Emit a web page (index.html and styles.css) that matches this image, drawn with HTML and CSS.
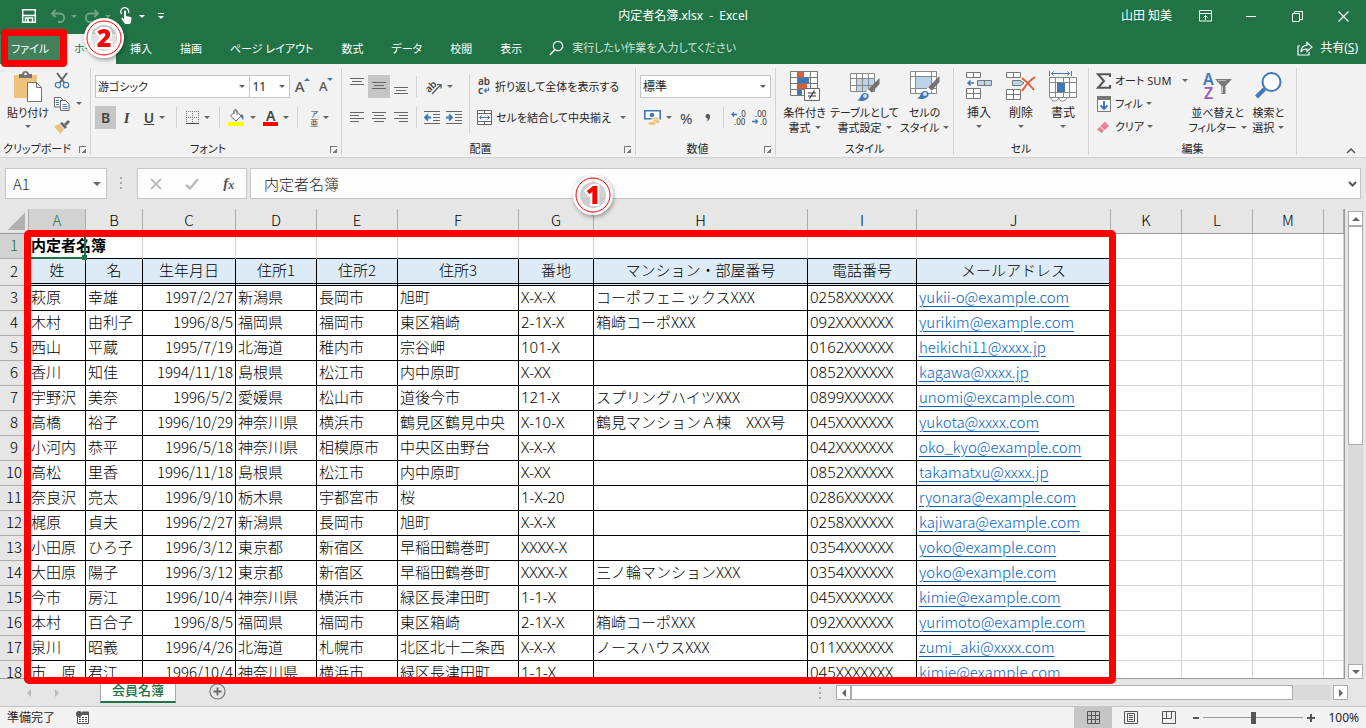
FILE: index.html
```html
<!DOCTYPE html>
<html lang="ja">
<head>
    <meta charset="UTF-8">
    <meta name="viewport" content="width=device-width, initial-scale=1.0">
    <title>内定者名簿.xlsx - Excel</title>
    <link rel="stylesheet" href="styles.css">
</head>
<body>
    <header class="titlebar">
        <div class="quick">
            <button class="q-btn save" aria-label="上書き保存"><svg width="16" height="16" viewBox="0 0 16 16"><path d="M1.700 1.700h12.600v12.600H1.700z" fill="none" stroke="#fff" stroke-width="1.500"/><path d="M2 7.500h12M4.500 14v-4h7v4" fill="none" stroke="#fff" stroke-width="1.500"/><path d="M6 11h2v3H6z" fill="#fff"/></svg></button>
            <button class="q-btn dim" aria-label="元に戻す"><svg width="16" height="16" viewBox="0 0 16 16"><path d="M5.500 2 2 5.500 5.500 9M2 5.500h8a4 4 0 0 1 0 8.500H8" fill="none" stroke="#fff" stroke-width="1.800"/></svg><i class="caret"></i></button>
            <button class="q-btn dim" aria-label="やり直し"><svg width="16" height="16" viewBox="0 0 16 16"><path d="M10.500 2 14 5.500 10.500 9M14 5.500H6a4 4 0 0 0 0 8.500h2" fill="none" stroke="#fff" stroke-width="1.800"/></svg><i class="caret"></i></button>
            <button class="q-btn" aria-label="タッチ/マウス"><svg width="16" height="18" viewBox="0 0 16 18"><path d="M3.500 7a4 4 0 1 1 7 -1" fill="none" stroke="#fff" stroke-width="1.300"/><path d="M6 4.500c0-1.300 2-1.300 2 0V9l4.500 1c.8.200 1 .8 1 1.500L13 15l-1 2H7l-3.500-5c-.4-1 .8-1.500 1.500-.8l1 .8z" fill="#fff"/></svg><i class="caret"></i></button>
            <button class="q-btn custom" aria-label="カスタマイズ"><i class="caret"></i></button>
        </div>
        <div class="doc-title">内定者名簿.xlsx&nbsp; -&nbsp; Excel</div>
        <div class="account">
            <span class="user">山田 知美</span>
            <button class="win-btn" aria-label="リボンの表示オプション"><svg width="13" height="12" viewBox="0 0 13 12"><path d="M.5.5h12v10.500H.5zM.5 3.500h12M6.500 10V5.500M4.500 7.500l2-2 2 2" fill="none" stroke="#fff"/></svg></button>
            <button class="win-btn" aria-label="最小化"><svg width="10" height="10"><path d="M0 5.500h10" stroke="#fff"/></svg></button>
            <button class="win-btn" aria-label="元のサイズに戻す"><svg width="11" height="11" viewBox="0 0 11 11"><path d="M.5 2.500h7v8h-7zM2.500 2.500v-2h8v8h-3" fill="none" stroke="#fff"/></svg></button>
            <button class="win-btn" aria-label="閉じる"><svg width="11" height="11" viewBox="0 0 11 11"><path d="M.5.5l10 10M10.500.5l-10 10" stroke="#fff" stroke-width="1.200"/></svg></button>
        </div>
    </header>

    <nav class="tabs">
        <button class="tab file">ファイル<span class="file-frame"></span></button>
        <button class="tab active">ホーム</button>
        <button class="tab">挿入</button>
        <button class="tab">描画</button>
        <button class="tab">ページ レイアウト</button>
        <button class="tab">数式</button>
        <button class="tab">データ</button>
        <button class="tab">校閲</button>
        <button class="tab">表示</button>
        <label class="tell-me">
            <svg width="15" height="16" viewBox="0 0 15 16"><circle cx="9" cy="6" r="4.700" fill="none" stroke="#fff" stroke-width="1.200"/><path d="M6 9.500.8 15" stroke="#fff" stroke-width="1.400"/></svg>
            <input type="text" placeholder="実行したい作業を入力してください" aria-label="操作アシスト">
        </label>
        <button class="share"><svg width="16" height="15" viewBox="0 0 16 15"><path d="M3 5H1v9h11v-3" fill="none" stroke="#fff" stroke-width="1.200"/><path d="M10 1.500 15 6l-5 4.500V8C7 8 5 9 4 11c0-4 2-6.500 6-7z" fill="none" stroke="#fff" stroke-width="1.200"/></svg><span>共有(<u>S</u>)</span></button>
        <svg class="badge badge-two" width="52" height="52" viewBox="0 0 52 52"><circle cx="26" cy="26" r="18" fill="#f3f3f3" fill-opacity=".75"/><circle class="ring-white" cx="26" cy="26" r="16.500"/><circle class="ring-red" cx="26" cy="26" r="17"/><text x="26" y="35">2</text></svg>
    </nav>

    <section class="ribbon">
        <div class="group clipboard">
            <div class="tools">
                <button class="big"><svg width="30" height="31" viewBox="0 0 30 31"><path d="M1 4h23v23H1z" fill="#eec27c"/><path d="M6 3h3c0-4 7-4 7 0h3v4H6z" fill="#737373"/><circle cx="12.500" cy="3" r="1.300" fill="#fff"/><path d="M14.500 11.500h9l5 5v14h-14z" fill="#fff" stroke="#737373"/><path d="M23.500 11.500v5h5" fill="none" stroke="#737373"/></svg><span>貼り付け</span><i class="caret"></i></button>
                <div class="stack">
                    <button class="small" aria-label="切り取り"><svg width="16" height="16" viewBox="0 0 16 16"><path d="M3 0l7.500 10M13 0 5.500 10" stroke="#666" stroke-width="2"/><circle cx="4" cy="12" r="2.700" fill="none" stroke="#4a7fb8" stroke-width="1.300"/><circle cx="12" cy="12" r="2.700" fill="none" stroke="#4a7fb8" stroke-width="1.300"/></svg></button>
                    <button class="small" aria-label="コピー"><svg width="16" height="14" viewBox="0 0 16 14"><path d="M.5.500h6l3 3V10h-9z" fill="#fff" stroke="#666"/><path d="M6.500 3.500h5l3.500 3.500v6.500H6.500z" fill="#fff" stroke="#666"/><path d="M2 3.500h3M2 5.500h3M2 7.500h3M8.500 7.500h4M8.500 9.500h5M8.500 11.500h5" stroke="#4a7fb8"/></svg><i class="caret"></i></button>
                    <button class="small" aria-label="書式のコピー"><svg width="16" height="15" viewBox="0 0 16 15"><path d="M0 7.500 5 5l5 5-3.500 5z" fill="#eec27c"/><path d="M6 4.500 8 3l5 5-2 2z" fill="#666"/><path d="M10 5l4-4 2 2-4 4z" fill="#666"/></svg></button>
                </div>
            </div>
            <div class="caption">クリップボード<button class="launch" aria-label="クリップボードの設定"></button></div>
        </div>

        <div class="group font">
            <div class="tools rows">
                <div class="row">
                    <span class="select font-name"><select aria-label="フォント"><option>游ゴシック</option></select></span>
                    <span class="select font-size"><select aria-label="フォント サイズ"><option>11</option></select></span>
                    <button class="icon grow" aria-label="フォント サイズの拡大"><b>A</b><i class="up"></i></button>
                    <button class="icon grow less" aria-label="フォント サイズの縮小"><b>A</b><i class="down"></i></button>
                </div>
                <div class="row">
                    <button class="icon on"><b>B</b></button>
                    <button class="icon"><em>I</em></button>
                    <button class="icon wide"><b><u>U</u></b><i class="caret"></i></button>
                    <i class="sep"></i>
                    <button class="icon wide" aria-label="罫線"><svg width="13" height="13" viewBox="0 0 13 13"><path d="M.5 0v12M6.500 0v12M12.500 0v12M0 .5h13M0 6.500h13" stroke="#777" stroke-dasharray="1 1"/><path d="M0 12.500h13" stroke="#444"/></svg><i class="caret"></i></button>
                    <i class="sep"></i>
                    <button class="icon wide" aria-label="塗りつぶしの色"><svg width="17" height="17" viewBox="0 0 17 17"><path d="M2.500 7 8 1.500 13 7l-5 5z" fill="#fff" stroke="#666"/><path d="M6 5V2c0-2 3-2 3 0v4" fill="none" stroke="#666"/><path d="M13 5c3 1 3 4 2 6l-2-3z" fill="#4a7fb8"/><path d="M0 13h16v4H0z" fill="#ff0"/></svg><i class="caret"></i></button>
                    <button class="icon wide" aria-label="フォントの色"><span class="font-color">A</span><i class="caret"></i></button>
                    <i class="sep"></i>
                    <button class="icon wide" aria-label="ふりがなの表示"><span class="ruby"><span>ア</span><span>亜</span></span><i class="caret"></i></button>
                </div>
            </div>
            <div class="caption">フォント<button class="launch" aria-label="フォントの設定"></button></div>
        </div>

        <div class="group align">
            <div class="tools">
                <div class="rows">
                    <div class="row">
                        <button class="icon" aria-label="上揃え"><svg width="14" height="20" viewBox="0 0 14 20"><path d="M0 1.500h14M2 4.500h10M0 7.500h14" stroke="#666"/></svg></button>
                        <button class="icon on" aria-label="上下中央揃え"><svg width="14" height="20" viewBox="0 0 14 20"><path d="M0 5.500h14M2 8.500h10M0 11.500h14" stroke="#666"/></svg></button>
                        <button class="icon" aria-label="下揃え"><svg width="14" height="20" viewBox="0 0 14 20"><path d="M0 10.500h14M2 13.500h10M0 16.500h14" stroke="#666"/></svg></button>
                        <i class="sep"></i>
                        <button class="icon wide" aria-label="方向"><svg width="17" height="16" viewBox="0 0 17 16"><text x="0" y="11" transform="rotate(-45 6 8)" class="ab">ab</text><path d="M7 15 15.500 6M12 5.500h4V9.500" fill="none" stroke="#555" stroke-width="1.200"/></svg><i class="caret"></i></button>
                    </div>
                    <div class="row">
                        <button class="icon" aria-label="左揃え"><svg width="14" height="12" viewBox="0 0 14 12"><path d="M0 .5h14M0 3.500h9M0 6.500h14M0 9.500h9" stroke="#666"/></svg></button>
                        <button class="icon" aria-label="中央揃え"><svg width="14" height="12" viewBox="0 0 14 12"><path d="M0 .5h14M2 3.500h10M0 6.500h14M2 9.500h10" stroke="#666"/></svg></button>
                        <button class="icon" aria-label="右揃え"><svg width="14" height="12" viewBox="0 0 14 12"><path d="M0 .5h14M5 3.500h9M0 6.500h14M5 9.500h9" stroke="#666"/></svg></button>
                        <i class="sep"></i>
                        <button class="icon" aria-label="インデントを減らす"><svg width="16" height="13" viewBox="0 0 16 13"><path d="M0 .5h16M9 3.500h7M9 6.500h7M9 9.500h7M0 12.500h16" stroke="#666"/><path d="M7 6.500H1M4 3.500l-3 3 3 3" fill="none" stroke="#3f78b5" stroke-width="1.800"/></svg></button>
                        <button class="icon" aria-label="インデントを増やす"><svg width="16" height="13" viewBox="0 0 16 13"><path d="M0 .5h16M9 3.500h7M9 6.500h7M9 9.500h7M0 12.500h16" stroke="#666"/><path d="M0 6.500h6M3 3.500l3 3-3 3" fill="none" stroke="#3f78b5" stroke-width="1.800"/></svg></button>
                    </div>
                </div>
                <i class="sep tall"></i>
                <div class="rows">
                    <button class="text-btn"><svg width="14" height="17" viewBox="0 0 14 17"><text x="1" y="7" class="ab">ab</text><text x="1" y="16" class="ab">c</text><path d="M11.500 9.500v3H8M9.500 10.500l-2 2 2 2" fill="none" stroke="#3f78b5" stroke-width="1.200"/></svg>折り返して全体を表示する</button>
                    <button class="text-btn"><svg width="15" height="15" viewBox="0 0 15 15"><path d="M.5.500h14v14H.5zM.5 3.500h14M.5 11.500h14M7.500.500v3M7.500 11.500v3" fill="#fff" stroke="#666"/><path d="M2.500 7.500h10M4.500 5.500l-2 2 2 2M10.500 5.500l2 2-2 2" fill="none" stroke="#3f78b5"/></svg>セルを結合して中央揃え<i class="caret"></i></button>
                </div>
            </div>
            <div class="caption">配置<button class="launch" aria-label="配置の設定"></button></div>
        </div>

        <div class="group number">
            <div class="tools rows">
                <div class="row">
                    <span class="select format"><select aria-label="表示形式"><option>標準</option></select></span>
                </div>
                <div class="row">
                    <button class="icon wide" aria-label="通貨表示形式"><svg width="17" height="16" viewBox="0 0 17 16"><path d="M.8.800h15.400v8H.8z" fill="#fff" stroke="#3f78b5" stroke-width="1.600"/><circle cx="8" cy="5" r="2.300" fill="#3f78b5"/><ellipse cx="11.500" cy="9" rx="4" ry="2" fill="#eec27c" stroke="#fff" stroke-width=".6"/><ellipse cx="12" cy="11.500" rx="4" ry="2" fill="#eec27c" stroke="#fff" stroke-width=".6"/><ellipse cx="8" cy="13.500" rx="4" ry="2" fill="#eec27c" stroke="#fff" stroke-width=".6"/></svg><i class="caret"></i></button>
                    <button class="icon percent">%</button>
                    <button class="icon" aria-label="桁区切りスタイル"><svg width="6" height="8" viewBox="0 0 6 8"><path d="M.5 2.300a2.300 2.300 0 1 1 4.600 0C5 5 3.500 7 1.500 7.500 2.500 6.500 2.800 5.500 2.800 4.600 1.500 4.600.5 3.500.5 2.300z" fill="#555"/></svg></button>
                    <i class="sep"></i>
                    <button class="icon" aria-label="小数点以下の表示桁数を増やす"><svg width="16" height="14" viewBox="0 0 16 14"><text x="8" y="6" class="dec">.0</text><text x="3" y="14" class="dec">.00</text><path d="M6 3.500H1M3 1.500l-2 2 2 2" fill="none" stroke="#3f78b5" stroke-width="1.300"/></svg></button>
                    <button class="icon" aria-label="小数点以下の表示桁数を減らす"><svg width="16" height="14" viewBox="0 0 16 14"><text x="3" y="6" class="dec">.00</text><text x="8" y="14" class="dec">.0</text><path d="M0 10.500h5.500M3.500 8.500l2 2-2 2" fill="none" stroke="#3f78b5" stroke-width="1.300"/></svg></button>
                </div>
            </div>
            <div class="caption">数値<button class="launch" aria-label="数値の設定"></button></div>
        </div>

        <div class="group styles">
            <div class="tools">
                <button class="big"><svg width="30" height="31" viewBox="0 0 30 31"><path d="M.5.500h27v24H.5zM.5 6.500h27M.5 12.500h27M.5 18.500h27M7.500.500v24M20.500.500v24" fill="#fff" stroke="#777"/><path d="M8 1h6v5H8zM8 13h9v5H8z" fill="#d95f3c"/><path d="M8 7h11v5H8zM8 19h4v5H8z" fill="#3f78b5"/><path d="M14.500 17.500h15v12h-15z" fill="#fff" stroke="#666"/><path d="M18 22h8M18 25h8M24.500 19.500l-5 8" stroke="#333" stroke-width="1.200"/></svg><span>条件付き</span><span>書式<i class="caret"></i></span></button>
                <button class="big"><svg width="30" height="31" viewBox="0 0 30 31"><path d="M.5 2.500h24v18H.5z" fill="#fff"/><path d="M7 8h18v13H7z" fill="#bdd3ea"/><path d="M.5 2.500h24v18H.5zM.5 7.500h24M.5 14.500h24M6.500 2.500v18M12.500 2.500v18M18.500 2.500v18" fill="none" stroke="#888"/><path d="M29.500 7v6l-8 9-4-3z" fill="#737373"/><path d="M18 18l4 4-3 2-3-3z" fill="#fff"/><path d="M7 29c4 0 3-7 8-7 4 0 5 4 2 6-3 2.500-7 2.500-10 1z" fill="#3f78b5"/><circle cx="15" cy="25" r="2" fill="#cfe0f2"/></svg><span>テーブルとして</span><span>書式設定<i class="caret"></i></span></button>
                <button class="big"><svg width="30" height="31" viewBox="0 0 30 31"><path d="M.5.500h26v22H.5z" fill="#fff" stroke="#888"/><path d="M6 6h15v11H6z" fill="#bdd3ea"/><path d="M.5 5.500h26M.5 17.500h26M5.500.500v22M21.500.500v22" fill="none" stroke="#888"/><path d="M29.500 5v6l-8 9-4-3z" fill="#737373"/><path d="M18 16l4 4-3 2-3-3z" fill="#fff"/><path d="M7 27c4 0 3-7 8-7 4 0 5 4 2 6-3 2.500-7 2.500-10 1z" fill="#3f78b5"/><circle cx="15" cy="23" r="2" fill="#cfe0f2"/></svg><span>セルの</span><span>スタイル<i class="caret"></i></span></button>
            </div>
            <div class="caption">スタイル</div>
        </div>

        <div class="group cells">
            <div class="tools">
                <button class="big"><svg width="26" height="31" viewBox="0 0 26 31"><path d="M.5 1.500h14v5H.5zM7.500 1.500v5M.5 17.500h14v10H.5zM.5 22.500h14M7.500 17.500v10" fill="#fff" stroke="#777"/><path d="M11.500 9.500h14v5h-14zM18.500 9.500v5" fill="#bdd3ea" stroke="#777"/><path d="M8 12H2M4.500 9.500 2 12l2.500 2.500" fill="none" stroke="#3f78b5" stroke-width="1.500"/></svg><span>挿入</span><i class="caret"></i></button>
                <button class="big"><svg width="30" height="31" viewBox="0 0 30 31"><path d="M.5 1.500h14v5H.5zM7.500 1.500v5M.5 18.500h14v10H.5zM.5 23.500h14M7.500 18.500v10" fill="#fff" stroke="#777"/><path d="M6.500 9.500h8v5h-8z" fill="#bdd3ea" stroke="#777"/><path d="M14 9.500l4 2.500-4 3" fill="#bdd3ea" stroke="#777"/><path d="M16 7c4 3 8 7 12 12M29 6c-5 3-9 8-13 14" fill="none" stroke="#d95f3c" stroke-width="2"/></svg><span>削除</span><i class="caret"></i></button>
                <button class="big"><svg width="28" height="31" viewBox="0 0 28 31"><path d="M.5 0v5M22.500 0v5M2 2.500h19M4.500.500l-2 2 2 2M18.500.500l2 2-2 2" fill="none" stroke="#3f78b5"/><path d="M.5 6.500h27v20H.5zM.5 11.500h27M.5 21.500h27M6.500 6.500v20M14.500 6.500v5M20.500 6.500v20M14.500 21.500v5" fill="#fff" stroke="#888"/><path d="M8 12h8v9H8z" fill="#3f78b5"/><path d="M2 27c0 4 6 4 8 0 0 4 6 4 8 0" fill="#fff" stroke="#888"/></svg><span>書式</span><i class="caret"></i></button>
            </div>
            <div class="caption">セル</div>
        </div>

        <div class="group editing">
            <div class="tools">
                <div class="stack">
                    <button class="small"><svg width="16" height="16" viewBox="0 0 16 16"><path d="M14 4V1.200H2L8 8l-6 6.800h12V12" fill="none" stroke="#555" stroke-width="2"/></svg><span>オート SUM</span><i class="caret far"></i></button>
                    <button class="small"><svg width="16" height="16" viewBox="0 0 16 16"><path d="M1.500.500h13v15h-13z" fill="#fff" stroke="#777"/><path d="M1 0h14v4H1z" fill="#777"/><path d="M8 5v8M4.500 9.500 8 13l3.500-3.500" fill="none" stroke="#3f78b5" stroke-width="2"/></svg><span>フィル</span><i class="caret"></i></button>
                    <button class="small"><svg width="16" height="16" viewBox="0 0 16 16"><path d="M1 10.500 9 2.500 13 7 5.500 14z" fill="#e58497"/><path d="M4 7.500l5 4.500" stroke="#f2f2f2"/></svg><span>クリア</span><i class="caret"></i></button>
                </div>
                <button class="big"><svg width="30" height="31" viewBox="0 0 30 31"><text x="0" y="14" class="az a">A</text><text x="1" y="28" class="az z">Z</text><path d="M12 8h17l-6.500 7v8h-4v-8z" fill="#7a7a7a"/><path d="M15 9.500h8M19.500 15v7" stroke="#bbb"/></svg><span>並べ替えと</span><span>フィルター<i class="caret"></i></span></button>
                <button class="big"><svg width="30" height="31" viewBox="0 0 30 31"><circle cx="18.500" cy="11" r="9" fill="#fff" stroke="#3f78b5" stroke-width="2"/><path d="M11.500 18 3.500 26" stroke="#3f78b5" stroke-width="4"/></svg><span>検索と</span><span>選択<i class="caret"></i></span></button>
            </div>
            <div class="caption">編集</div>
        </div>
        <button class="collapse" aria-label="リボンを折りたたむ"><svg width="10" height="6" viewBox="0 0 10 6"><path d="M1 5l4-4 4 4" fill="none" stroke="#555" stroke-width="1.500"/></svg></button>
    </section>

    <section class="formula-bar">
        <label class="name-box"><input type="text" value="A1" aria-label="名前ボックス"><i class="caret"></i></label>
        <span class="dots"></span>
        <div class="fx">
            <button aria-label="キャンセル"><svg width="12" height="12" viewBox="0 0 12 12"><path d="M1 1l10 10M11 1 1 11" stroke="#bbb" stroke-width="1.800"/></svg></button>
            <button aria-label="入力"><svg width="14" height="12" viewBox="0 0 14 12"><path d="M1 7l4 3.500L13 1" fill="none" stroke="#bbb" stroke-width="2.400"/></svg></button>
            <button class="fx-btn">f<sub>x</sub></button>
        </div>
        <label class="formula"><input type="text" value="内定者名簿" aria-label="数式バー"><svg width="9" height="6" viewBox="0 0 9 6"><path d="M1 1l3.500 3.500L8 1" fill="none" stroke="#555" stroke-width="2"/></svg></label>
        <svg class="badge badge-one" width="52" height="52" viewBox="0 0 52 52"><circle cx="26" cy="26" r="18" fill="#dcdcdc" fill-opacity=".7"/><circle class="ring-white" cx="26" cy="26" r="16.500"/><circle class="ring-red" cx="26" cy="26" r="17"/><text x="26" y="35">1</text></svg>
    </section>

    <main class="workbook">
        <div class="sheet">
            <table>
                <colgroup>
                    <col class="c-head"><col class="c-57"><col class="c-57"><col class="c-93"><col class="c-81"><col class="c-81"><col class="c-121"><col class="c-75"><col class="c-214"><col class="c-109"><col class="c-194"><col class="c-71"><col class="c-71"><col class="c-71"><col>
                </colgroup>
                <thead>
                    <tr><th class="corner"></th><th class="sel">A</th><th>B</th><th>C</th><th>D</th><th>E</th><th>F</th><th>G</th><th>H</th><th>I</th><th>J</th><th>K</th><th>L</th><th>M</th><th></th></tr>
                </thead>
                <tbody>
                    <tr class="first"><th class="sel">1</th><td class="current">内定者名簿<span class="cursor"></span></td><td></td><td></td><td></td><td></td><td></td><td></td><td></td><td></td><td></td><td></td><td></td><td></td><td></td></tr>
                    <tr class="labels"><th>2</th><td>姓</td><td>名</td><td>生年月日</td><td>住所1</td><td>住所2</td><td>住所3</td><td>番地</td><td>マンション・部屋番号</td><td>電話番号</td><td>メールアドレス</td><td></td><td></td><td></td><td></td></tr>
                    <tr><th>3</th><td>萩原</td><td>幸雄</td><td>1997/2/27</td><td>新潟県</td><td>長岡市</td><td>旭町</td><td>X-X-X</td><td>コーポフェニックスXXX</td><td>0258XXXXXX</td><td><a href="mailto:yukii-o@example.com">yukii-o@example.com</a></td><td></td><td></td><td></td><td></td></tr>
                    <tr><th>4</th><td>木村</td><td>由利子</td><td>1996/8/5</td><td>福岡県</td><td>福岡市</td><td>東区箱崎</td><td>2-1X-X</td><td>箱崎コーポXXX</td><td>092XXXXXXX</td><td><a href="mailto:yurikim@example.com">yurikim@example.com</a></td><td></td><td></td><td></td><td></td></tr>
                    <tr><th>5</th><td>西山</td><td>平蔵</td><td>1995/7/19</td><td>北海道</td><td>稚内市</td><td>宗谷岬</td><td>101-X</td><td></td><td>0162XXXXXX</td><td><a href="mailto:heikichi11@xxxx.jp">heikichi11@xxxx.jp</a></td><td></td><td></td><td></td><td></td></tr>
                    <tr><th>6</th><td>香川</td><td>知佳</td><td>1994/11/18</td><td>島根県</td><td>松江市</td><td>内中原町</td><td>X-XX</td><td></td><td>0852XXXXXX</td><td><a href="mailto:kagawa@xxxx.jp">kagawa@xxxx.jp</a></td><td></td><td></td><td></td><td></td></tr>
                    <tr><th>7</th><td>宇野沢</td><td>美奈</td><td>1996/5/2</td><td>愛媛県</td><td>松山市</td><td>道後今市</td><td>121-X</td><td>スプリングハイツXXX</td><td>0899XXXXXX</td><td><a href="mailto:unomi@excample.com">unomi@excample.com</a></td><td></td><td></td><td></td><td></td></tr>
                    <tr><th>8</th><td>高橋</td><td>裕子</td><td>1996/10/29</td><td>神奈川県</td><td>横浜市</td><td>鶴見区鶴見中央</td><td>X-10-X</td><td>鶴見マンションＡ棟　XXX号</td><td>045XXXXXXX</td><td><a href="mailto:yukota@xxxx.com">yukota@xxxx.com</a></td><td></td><td></td><td></td><td></td></tr>
                    <tr><th>9</th><td>小河内</td><td>恭平</td><td>1996/5/18</td><td>神奈川県</td><td>相模原市</td><td>中央区由野台</td><td>X-X-X</td><td></td><td>042XXXXXXX</td><td><a href="mailto:oko_kyo@example.com">oko_kyo@example.com</a></td><td></td><td></td><td></td><td></td></tr>
                    <tr><th>10</th><td>高松</td><td>里香</td><td>1996/11/18</td><td>島根県</td><td>松江市</td><td>内中原町</td><td>X-XX</td><td></td><td>0852XXXXXX</td><td><a href="mailto:takamatxu@xxxx.jp">takamatxu@xxxx.jp</a></td><td></td><td></td><td></td><td></td></tr>
                    <tr><th>11</th><td>奈良沢</td><td>亮太</td><td>1996/9/10</td><td>栃木県</td><td>宇都宮市</td><td>桜</td><td>1-X-20</td><td></td><td>0286XXXXXX</td><td><a href="mailto:ryonara@example.com">ryonara@example.com</a></td><td></td><td></td><td></td><td></td></tr>
                    <tr><th>12</th><td>梶原</td><td>貞夫</td><td>1996/2/27</td><td>新潟県</td><td>長岡市</td><td>旭町</td><td>X-X-X</td><td></td><td>0258XXXXXX</td><td><a href="mailto:kajiwara@example.com">kajiwara@example.com</a></td><td></td><td></td><td></td><td></td></tr>
                    <tr><th>13</th><td>小田原</td><td>ひろ子</td><td>1996/3/12</td><td>東京都</td><td>新宿区</td><td>早稲田鶴巻町</td><td>XXXX-X</td><td></td><td>0354XXXXXX</td><td><a href="mailto:yoko@example.com">yoko@example.com</a></td><td></td><td></td><td></td><td></td></tr>
                    <tr><th>14</th><td>大田原</td><td>陽子</td><td>1996/3/12</td><td>東京都</td><td>新宿区</td><td>早稲田鶴巻町</td><td>XXXX-X</td><td>三ノ輪マンションXXX</td><td>0354XXXXXX</td><td><a href="mailto:yoko@example.com">yoko@example.com</a></td><td></td><td></td><td></td><td></td></tr>
                    <tr><th>15</th><td>今市</td><td>房江</td><td>1996/10/4</td><td>神奈川県</td><td>横浜市</td><td>緑区長津田町</td><td>1-1-X</td><td></td><td>045XXXXXXX</td><td><a href="mailto:kimie@example.com">kimie@example.com</a></td><td></td><td></td><td></td><td></td></tr>
                    <tr><th>16</th><td>本村</td><td>百合子</td><td>1996/8/5</td><td>福岡県</td><td>福岡市</td><td>東区箱崎</td><td>2-1X-X</td><td>箱崎コーポXXX</td><td>092XXXXXXX</td><td><a href="mailto:yurimoto@example.com">yurimoto@example.com</a></td><td></td><td></td><td></td><td></td></tr>
                    <tr><th>17</th><td>泉川</td><td>昭義</td><td>1996/4/26</td><td>北海道</td><td>札幌市</td><td>北区北十二条西</td><td>X-X-X</td><td>ノースハウスXXX</td><td>011XXXXXXX</td><td><a href="mailto:zumi_aki@xxxx.com">zumi_aki@xxxx.com</a></td><td></td><td></td><td></td><td></td></tr>
                    <tr><th>18</th><td>市　原</td><td>君江</td><td>1996/10/4</td><td>神奈川県</td><td>横浜市</td><td>緑区長津田町</td><td>1-1-X</td><td></td><td>045XXXXXXX</td><td><a href="mailto:kimie@example.com">kimie@example.com</a></td><td></td><td></td><td></td><td></td></tr>
                </tbody>
            </table>
        </div>
        <div class="v-scroll">
            <button class="s-btn" aria-label="上へ"><i class="up"></i></button>
            <div class="track"><div class="thumb"></div></div>
            <button class="s-btn" aria-label="下へ"><i class="down"></i></button>
        </div>
        <div class="frame"></div>
    </main>

    <section class="sheet-bar">
        <div class="sheet-nav"><button aria-label="前のシート"><i class="left"></i></button><button aria-label="次のシート"><i class="right"></i></button></div>
        <button class="sheet-tab">会員名簿</button>
        <button class="add" aria-label="新しいシート"><svg width="17" height="17" viewBox="0 0 17 17"><circle cx="8.500" cy="8.500" r="7.500" fill="none" stroke="#777" stroke-width="1.200"/><path d="M8.500 4.500v8M4.500 8.500h8" stroke="#666" stroke-width="1.800"/></svg></button>
        <span class="dots"></span>
        <div class="h-scroll">
            <button class="s-btn" aria-label="左へ"><i class="left"></i></button>
            <div class="track"><div class="thumb"></div></div>
            <button class="s-btn" aria-label="右へ"><i class="right"></i></button>
        </div>
    </section>

    <footer class="status">
        <span>準備完了</span>
        <button class="macro" aria-label="マクロの記録"><svg width="14" height="13" viewBox="0 0 14 13"><path d="M1.500 4v8.500h11V1H6" fill="#fff" stroke="#555"/><path d="M6 1h7v3H6z" fill="#555"/><circle cx="3" cy="3" r="3" fill="#555"/><path d="M3 6.500h9M3 8.500h9M3 10.500h9" stroke="#555" stroke-dasharray="2 1"/></svg></button>
        <div class="views">
            <button class="view on" aria-label="標準"><svg width="13" height="13" viewBox="0 0 13 13"><path d="M.5.500h12v12H.5zM.5 4.500h12M.5 8.500h12M4.500.500v12M8.500.500v12" fill="none" stroke="#555"/></svg></button>
            <button class="view" aria-label="ページ レイアウト"><svg width="14" height="13" viewBox="0 0 14 13"><path d="M.5.500h13v12H.5zM3.500 2.500h7v8h-7zM5 4.500h4M5 6.500h4M5 8.500h4" fill="none" stroke="#555"/></svg></button>
            <button class="view" aria-label="改ページ プレビュー"><svg width="14" height="13" viewBox="0 0 14 13"><path d="M.5.500h13v12H.5zM4.500.500v7M9.500.500v7M.5 7.500h9" fill="none" stroke="#555"/></svg></button>
        </div>
        <button class="zoom-btn" aria-label="縮小"><svg width="8" height="8"><path d="M1 4h6" stroke="#555" stroke-width="2"/></svg></button>
        <input class="zoom" type="range" min="0" max="100" value="50" aria-label="ズーム">
        <button class="zoom-btn" aria-label="拡大"><svg width="8" height="8"><path d="M0 4h8M4 0v8" stroke="#555" stroke-width="2"/></svg></button>
        <span class="percent-value">100%</span>
    </footer>
</body>
</html>
```

FILE: styles.css
```css
* {
    box-sizing: border-box;
}

body {
    margin: 0;
    height: 100vh;
    display: flex;
    flex-direction: column;
    overflow: hidden;
    background-color: #e6e6e6;
    color: #262626;
    font-family: "Noto Sans", "Noto Sans CJK JP", sans-serif;
    font-size: 12px;
    line-height: 16px;
    font-feature-settings: "palt";
}

button, input, select {
    font: inherit;
    font-feature-settings: inherit;
    color: inherit;
    margin: 0;
    padding: 0;
    border: 0;
    border-radius: 0;
    background: none;
}

input:focus, select:focus {
    outline: none;
}

svg {
    display: block;
    flex: none;
    overflow: visible;
}

/* small triangles */
.caret, .up, .down, .left, .right {
    display: inline-block;
    flex: none;
    border: 3px solid transparent;
}

.caret, .down {
    border-top-color: #666;
    border-bottom-width: 0;
}

.up {
    border-bottom-color: #666;
    border-top-width: 0;
}

.left {
    border-right-color: #666;
    border-left-width: 0;
}

.right {
    border-left-color: #666;
    border-right-width: 0;
}

/* title bar */
.titlebar {
    display: grid;
    grid-template-columns: 1fr auto 1fr;
    align-items: center;
    height: 32px;
    flex: none;
    background-color: #217346;
    color: #fff;
}

.quick {
    display: flex;
    align-items: center;
    gap: 7px;
    padding-left: 21px;
}

.q-btn {
    display: flex;
    align-items: center;
    gap: 5px;
}

.q-btn .caret {
    border-top-color: #fff;
}

.q-btn.save {
    margin-right: 6px;
}

.q-btn.dim {
    opacity: .35;
}

.q-btn.custom {
    border-top: 1px solid #fff;
    margin-left: 6px;
    padding-top: 2px;
}

.account {
    display: flex;
    align-items: center;
    justify-content: flex-end;
}

.user {
    margin-right: 10px;
}

.win-btn {
    width: 46px;
    height: 32px;
    display: flex;
    align-items: center;
    justify-content: center;
}

/* ribbon tabs */
.tabs {
    position: relative;
    display: flex;
    height: 32px;
    flex: none;
    background-color: #217346;
    color: #fff;
}

.tab {
    padding: 0 14px;
    height: 30px;
    margin-top: 2px;
    font-size: 11px;
    white-space: nowrap;
}

.tab.file {
    position: relative;
    width: 60px;
    padding: 0;
    background-color: #43815c;
}

.tab.active {
    width: 56px;
    background-color: #f2f2f2;
    color: #217346;
}

.file-frame {
    position: absolute;
    left: 1px;
    top: -5px;
    width: 66px;
    height: 38px;
    border: 7px solid #f00;
    border-radius: 4px;
}

.tell-me {
    display: flex;
    align-items: center;
    gap: 8px;
    margin-left: 13px;
    flex: 1;
    font-size: 11px;
}

.tell-me input {
    flex: 1;
}

.tell-me input::placeholder {
    color: #d3e5da;
    opacity: 1;
}

.share {
    display: flex;
    align-items: center;
    gap: 7px;
    padding: 0 8px;
}

/* numbered marks */
.badge {
    position: absolute;
    z-index: 5;
    filter: drop-shadow(1px 2px 2px rgba(0, 0, 0, .35));
}

.badge-two {
    left: 78px;
    top: -20px;
}

.badge-one {
    left: 567px;
    top: 11px;
}

.ring-white {
    fill: none;
    stroke: #fff;
    stroke-width: 7px;
}

.ring-red {
    fill: none;
    stroke: #f00;
    stroke-width: 1px;
}

.badge text {
    font-family: "Noto Sans", sans-serif;
    font-size: 25px;
    font-weight: 900;
    text-anchor: middle;
    fill: #f00;
    stroke: #fff;
    stroke-width: 4px;
    paint-order: stroke;
}

/* ribbon */
.ribbon {
    display: flex;
    height: 94px;
    flex: none;
    padding-top: 4px;
    background-color: #f2f2f2;
    border-bottom: 1px solid #d2d2d2;
}

.group {
    display: flex;
    flex-direction: column;
    flex: none;
    border-right: 1px solid #d2d2d2;
    margin-bottom: 2px;
}

.clipboard { width: 91px; }
.font { width: 251px; }
.align { width: 294px; }
.number { width: 140px; }
.styles { width: 178px; }
.cells { width: 135px; }
.editing { width: 208px; }

.tools {
    display: flex;
    flex: 1;
    padding: 0 4px;
}

.rows {
    display: flex;
    flex-direction: column;
    gap: 8px;
    padding-top: 7px;
}

.row {
    display: flex;
    height: 23px;
}

.caption {
    position: relative;
    height: 14px;
    padding-right: 16px;
    font-size: 11px;
    text-align: center;
}

.styles .caption, .cells .caption, .editing .caption {
    padding-right: 0;
}

.launch {
    position: absolute;
    right: 4px;
    top: 5px;
    width: 7px;
    height: 7px;
    border-left: 1px solid #777;
    border-top: 1px solid #777;
    background: linear-gradient(135deg, transparent 60%, #777 60%);
}

.big {
    display: flex;
    flex-direction: column;
    align-items: center;
    padding-top: 3px;
    line-height: 15px;
    white-space: nowrap;
}

.big span {
    display: flex;
    align-items: center;
    gap: 4px;
}

.big svg {
    margin-bottom: 3px;
}

.big > .caret {
    margin-top: 5px;
}

.clipboard .big {
    width: 48px;
    font-size: 11px;
}

.cells .big {
    width: 42px;
}

.styles .big {
    width: 60px;
    flex: none;
    font-size: 11px;
}

.editing .big {
    width: 50px;
    margin-left: 2px;
    font-size: 11px;
}

.styles .tools {
    padding: 0;
    justify-content: center;
}

.stack {
    display: flex;
    flex-direction: column;
    padding-top: 1px;
}

.small {
    display: flex;
    align-items: center;
    height: 23px;
    gap: 4px;
    white-space: nowrap;
}

.clipboard .small {
    padding-left: 2px;
    gap: 6px;
}

.editing .stack {
    width: 103px;
    padding-left: 3px;
}

.editing .small {
    gap: 3px;
    font-size: 11px;
}

.caret.far {
    margin-left: 8px;
}

.icon {
    display: flex;
    align-items: center;
    justify-content: center;
    gap: 5px;
    width: 22px;
    height: 23px;
    font-size: 14px;
    color: #444;
}

.icon.on {
    background-color: #c6c6c6;
}

.icon.wide {
    width: 36px;
}

.icon em {
    font-family: "Liberation Serif", serif;
    font-weight: bold;
    font-size: 15px;
}

.icon.grow {
    align-items: flex-start;
    gap: 0;
    margin-left: 2px;
    padding-top: 3px;
    font-size: 15px;
    color: #555;
}

.icon.less {
    font-size: 13px;
}

.icon b {
    font-weight: 600;
}

.grow b {
    font-weight: 500;
}

.grow .up {
    border-bottom-color: #3f78b5;
}

.grow .down {
    border-top-color: #3f78b5;
}

.icon.percent {
    font-size: 15px;
}

.font-color {
    font-weight: 600;
    line-height: 13px;
    padding: 0 3px;
    border-bottom: 4px solid #f00;
}

.ruby {
    display: flex;
    flex-direction: column;
    font-size: 8px;
    line-height: 9px;
}

.sep {
    flex: none;
    width: 1px;
    margin: 1px 4px;
    background-color: #d2d2d2;
}

.sep.tall {
    margin: 6px 7px 8px 4px;
}

.select {
    position: relative;
    display: flex;
    height: 23px;
    background-color: #fff;
    border: 1px solid #c6c6c6;
}

.select select {
    width: 100%;
    padding-left: 2px;
    appearance: none;
}

.select::after {
    content: "";
    position: absolute;
    right: 4px;
    top: 9px;
    border: 3px solid transparent;
    border-top-color: #666;
    border-bottom-width: 0;
    pointer-events: none;
}

.font-name {
    width: 158px;
    font-size: 11px;
}

.font-size { width: 41px; margin-left: -1px; }
.format { width: 131px; }

.text-btn {
    display: flex;
    align-items: center;
    gap: 4px;
    height: 23px;
    font-size: 11px;
    white-space: nowrap;
}

.text-btn .caret {
    margin-left: 5px;
}

.ab {
    font-size: 10px;
    font-weight: 600;
    fill: #444;
}

.dec {
    font-size: 8px;
    fill: #333;
}

.az {
    font-size: 16px;
    font-weight: 600;
}

.az.a { fill: #3f78b5; }
.az.z { fill: #9a5bbd; }

.collapse {
    margin: auto 10px 3px auto;
}

/* formula bar */
.formula-bar {
    position: relative;
    display: flex;
    flex: none;
    height: 51px;
    padding: 10px 5px 10px;
    font-size: 15px;
    font-family: "Noto Sans CJK JP", sans-serif;
    font-weight: 300;
    font-feature-settings: normal;
}

.name-box, .fx, .formula {
    display: flex;
    align-items: center;
    height: 31px;
    background-color: #fdfdfd;
    border: 1px solid #c6c6c6;
}

.name-box {
    width: 102px;
    padding: 0 5px 0 7px;
}

.name-box input {
    width: 100%;
}

.name-box .caret {
    border-width: 4px;
    border-bottom-width: 0;
}

.dots {
    width: 2px;
    height: 12px;
    margin: 9px 15px 0 13px;
    background: repeating-linear-gradient(#aaa 0 2px, transparent 2px 5px);
}

.fx {
    width: 110px;
    margin-right: 3px;
    justify-content: space-around;
}

.fx-btn {
    font-family: "Liberation Serif", serif;
    font-style: italic;
    font-weight: bold;
    font-size: 15px;
    color: #555;
}

.fx-btn sub {
    font-size: 12px;
    vertical-align: -1px;
}

.formula {
    flex: 1;
    padding: 0 3px 0 13px;
}

.formula input {
    flex: 1;
}

/* workbook grid */
.workbook {
    position: relative;
    display: flex;
    flex: 1;
    min-height: 0;
}

.sheet {
    flex: 1;
    overflow: hidden;
    border-right: 1px solid #999;
    border-bottom: 1px solid #999;
    background-color: #fff;
}

table {
    width: 100%;
    table-layout: fixed;
    border-collapse: separate;
    border-spacing: 0;
    font-family: "Noto Sans CJK JP", sans-serif;
    font-size: 15px;
    font-weight: 300;
    font-feature-settings: normal;
    line-height: 20px;
    color: #000;
}

.c-head { width: 29px; }
.c-57 { width: 57px; }
.c-93 { width: 93px; }
.c-81 { width: 81px; }
.c-121 { width: 121px; }
.c-75 { width: 75px; }
.c-214 { width: 214px; }
.c-109 { width: 109px; }
.c-194 { width: 194px; }
.c-71 { width: 71px; }

th, td {
    height: 25px;
    padding: 0 2px 2px;
    white-space: nowrap;
    overflow: hidden;
    border-right: 1px solid #d4d4d4;
    border-bottom: 1px solid #d4d4d4;
    text-align: left;
}

th {
    font-weight: 300;
    text-align: center;
    background-color: #e6e6e6;
    border-color: #ababab;
}

thead th {
    border-bottom-color: #999;
}

tbody th {
    padding: 0 0 2px;
}

th.sel {
    background-color: #d2d2d2;
    color: #217346;
}

.corner {
    background: linear-gradient(135deg, transparent 50%, #b1b1b1 50%) 8px 4px / 17px 17px no-repeat #e6e6e6;
}

td:nth-child(n+2):nth-child(-n+11) {
    border-color: #000;
}

td:nth-child(4) {
    text-align: right;
}

td:nth-child(8), td:nth-child(10) {
    font-family: "Noto Sans", "Noto Sans CJK JP", sans-serif;
}

.first td:nth-child(n+2):nth-child(-n+11) {
    border-right-color: #d4d4d4;
}

.labels td {
    text-align: center;
}

.labels td:nth-child(n+2):nth-child(-n+11) {
    height: 27px;
    background-color: #ddebf7;
    border-bottom: 3px double #000;
}

td.current {
    position: relative;
    overflow: visible;
    font-weight: 700;
}

.cursor {
    position: absolute;
    left: -1px;
    top: 0;
    width: 58px;
    height: 25px;
    border-right: 2px solid #217346;
    border-bottom: 2px solid #217346;
}

.cursor::after {
    content: "";
    position: absolute;
    right: -3px;
    bottom: -3px;
    width: 5px;
    height: 5px;
    background-color: #217346;
}

td a {
    color: #0563c1;
    text-underline-offset: 3px;
}

.frame {
    position: absolute;
    left: 24px;
    top: 21px;
    bottom: -5px;
    width: 1092px;
    border: 7px solid #f00;
    border-radius: 5px;
    pointer-events: none;
}

/* scroll bars */
.v-scroll {
    width: 21px;
    display: flex;
    flex-direction: column;
    padding: 2px 3px 0;
}

.s-btn {
    flex: none;
    display: flex;
    align-items: center;
    justify-content: center;
    width: 15px;
    height: 15px;
    background-color: #fff;
    border: 1px solid #ababab;
}

.s-btn i {
    border-width: 4px;
}

.s-btn .up { border-top-width: 0; }
.s-btn .down { border-bottom-width: 0; }
.s-btn .left { border-left-width: 0; }
.s-btn .right { border-right-width: 0; }

.track {
    flex: 1;
    background-color: #dadada;
}

.thumb {
    background-color: #fff;
    border: 1px solid #ababab;
}

.v-scroll .thumb {
    width: 15px;
    height: 50%;
}

/* sheet tabs */
.sheet-bar {
    display: flex;
    flex: none;
    height: 28px;
    border-bottom: 1px solid #c6c6c6;
}

.sheet-nav {
    width: 100px;
    display: flex;
    align-items: center;
    gap: 24px;
    padding-left: 27px;
}

.sheet-nav i {
    border-width: 4px;
    opacity: .35;
}

.sheet-nav .left { border-left-width: 0; }
.sheet-nav .right { border-right-width: 0; }

.sheet-tab {
    width: 76px;
    height: 24px;
    font-size: 13px;
    font-weight: 500;
    color: #217346;
    background-color: #fff;
    border: 1px solid #ababab;
    border-top: 0;
    border-bottom: 2px solid #217346;
}

.add {
    margin: 0 auto 2px 33px;
}

.sheet-bar .dots {
    margin: 8px 15px 0;
}

.h-scroll {
    display: flex;
    width: 512px;
    margin: 6px 18px 0 0;
}

.h-scroll .track {
    height: 15px;
    margin-right: 2px;
}

.h-scroll .thumb {
    width: 92%;
    height: 15px;
}

/* status bar */
.status {
    display: flex;
    align-items: center;
    flex: none;
    height: 21px;
    padding: 0 7px;
    background-color: #f2f2f2;
}

.macro {
    margin-left: 21px;
}

.views {
    display: flex;
    margin-left: auto;
    height: 100%;
}

.view {
    width: 38px;
    display: flex;
    align-items: center;
    justify-content: center;
}

.view.on {
    background-color: #c6c6c6;
}

.zoom-btn {
    margin: 0 3px 0 4px;
}

.zoom {
    width: 100px;
    height: 12px;
    appearance: none;
    background: linear-gradient(#999, #999) center / 100% 1px no-repeat;
}

.zoom::-webkit-slider-thumb {
    appearance: none;
    width: 5px;
    height: 12px;
    background-color: #555;
}

.percent-value {
    width: 41px;
    text-align: right;
}
```
